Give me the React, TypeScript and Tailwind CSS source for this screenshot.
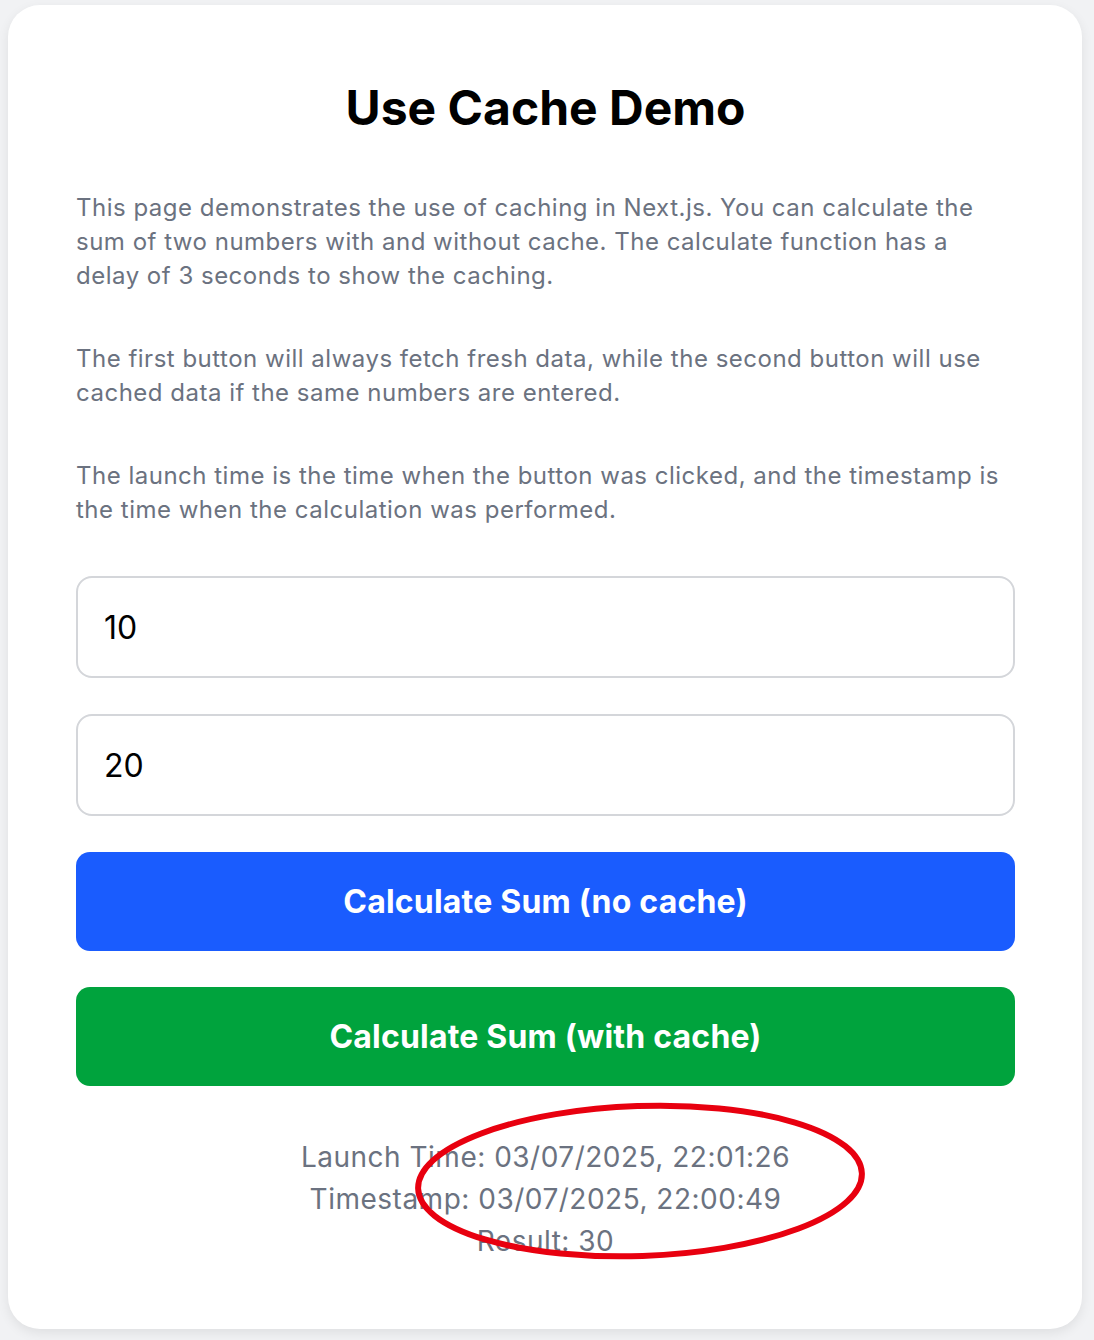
import React, { useState } from 'react';

const paragraphs = [
    'This page demonstrates the use of caching in Next.js. You can calculate the sum of two numbers with and without cache. The calculate function has a delay of 3 seconds to show the caching.',
    'The first button will always fetch fresh data, while the second button will use cached data if the same numbers are entered.',
    'The launch time is the time when the button was clicked, and the timestamp is the time when the calculation was performed.',
];

export default function App() {
    const [a, setA] = useState('10');
    const [b, setB] = useState('20');

    return (
        <div className="min-h-screen bg-[#f1f2f4] pl-2 pr-3 pt-[5px] pb-2 font-['Inter',sans-serif]">
            <div className="bg-white rounded-[32px] shadow-[0_4px_12px_rgba(0,0,0,0.08)] pl-[68px] pr-[67px] pt-[74px] pb-[67px]">
                <h1 className="text-center text-[48px] leading-[58px] font-bold text-black mb-[54px]">
                    Use Cache Demo
                </h1>

                <div className="flex flex-col gap-[49px] mb-[49px]">
                    {paragraphs.map((p, i) => (
                        <p key={i} className="text-[24px] leading-[34px] tracking-[0.5px] text-[#6b7280]">{p}</p>
                    ))}
                </div>

                <div className="flex flex-col gap-[36px]">
                    <input
                        value={a}
                        onChange={e => setA(e.target.value)}
                        className="h-[102px] w-full border-2 border-[#d4d6da] rounded-[16px] px-[26px] text-[32px] text-black outline-none"
                    />
                    <input
                        value={b}
                        onChange={e => setB(e.target.value)}
                        className="h-[102px] w-full border-2 border-[#d4d6da] rounded-[16px] px-[26px] text-[32px] text-black outline-none"
                    />
                    <button className="h-[99px] w-full rounded-[14px] bg-[#1a5cfe] text-white text-[32px] font-bold tracking-[0.2px]">
                        Calculate Sum (no cache)
                    </button>
                    <button className="h-[99px] w-full rounded-[14px] bg-[#00a33d] text-white text-[32px] font-bold tracking-[0.2px]">
                        Calculate Sum (with cache)
                    </button>
                </div>

                <div className="relative mt-[50px] text-center text-[28px] leading-[42px] tracking-[0.5px] text-[#6b7280]">
                    <p>Launch Time: 03/07/2025, 22:01:26</p>
                    <p>Timestamp: 03/07/2025, 22:00:49</p>
                    <p>Result: {Number(a) + Number(b)}</p>
                    <svg
                        className="absolute left-[324px] top-[-45px] pointer-events-none"
                        width="480"
                        height="180"
                        viewBox="0 0 480 180"
                    >
                        <ellipse
                            cx="240"
                            cy="90"
                            rx="222"
                            ry="75"
                            fill="none"
                            stroke="#e8000f"
                            strokeWidth="6"
                            transform="rotate(-2 240 90)"
                        />
                    </svg>
                </div>
            </div>
        </div>
    );
}
